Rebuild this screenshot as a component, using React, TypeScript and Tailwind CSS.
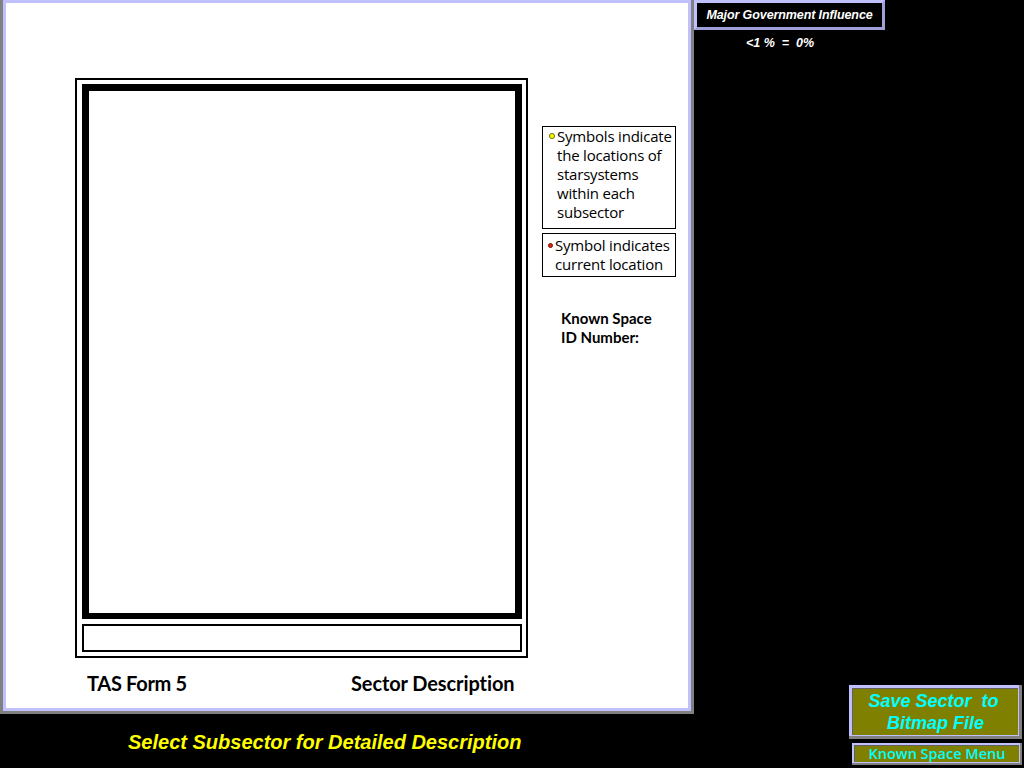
import React from "react";

export default function App() {
  return (
    <div className="w-[1024px] h-[768px] bg-black flex overflow-hidden">
      {/* Left column */}
      <div className="w-[694px] flex flex-col">
        <div className="h-[714px] border-l-[3px] border-r-[3px] border-b-[3px] border-[#808080]">
          <div className="h-full border-[3px] border-[#c0c0fc] bg-white flex">
            <div className="ml-[69px] mt-[75px] flex flex-col">
              <div className="w-[453px] h-[580px] border-2 border-black pl-[5px] pr-[4px] pt-[4px] flex flex-col">
                <div className="w-[440px] h-[535px] border-[7px] border-b-[6px] border-black" />
                <div className="w-[440px] h-[28px] mt-[5px] border-2 border-black" />
              </div>
              <div
                className="flex mt-[13px] text-[20px] font-bold text-black leading-[24px]"
                style={{ fontFamily: "Lato, 'Open Sans', sans-serif" }}
              >
                <span className="ml-[12px] w-[264px] tracking-[-0.3px]">TAS Form 5</span>
                <span className="tracking-[-0.1px]">Sector Description</span>
              </div>
            </div>
            <div
              className="ml-[14px] mt-[123px] flex flex-col text-[15px] text-black"
              style={{ fontFamily: "'Open Sans', Lato, sans-serif" }}
            >
              <div className="w-[134px] h-[103px] border border-black pt-0 pl-[6px] flex items-start leading-[19px]">
                <span className="mt-[6px] w-[6px] h-[6px] rounded-full bg-[#ffff00] border border-[#6a6a00] shrink-0" />
                <span className="ml-[2px] tracking-[-0.2px]">
                  Symbols indicate the locations of starsystems within each subsector
                </span>
              </div>
              <div className="w-[134px] h-[44px] mt-[4px] border border-black pt-[2px] pl-[5px] flex items-start leading-[19px]">
                <span className="mt-[7px] w-[5px] h-[5px] rounded-full bg-[#e02010] border border-[#801000] shrink-0" />
                <span className="ml-[2px] tracking-[-0.2px]">Symbol indicates current location</span>
              </div>
              <div
                className="ml-[19px] mt-[32px] font-bold leading-[19px] text-[15px]"
                style={{ fontFamily: "Lato, 'Open Sans', sans-serif" }}
              >
                <div>Known Space</div>
                <div>ID Number:</div>
              </div>
            </div>
          </div>
        </div>
        <div
          className="pl-[128px] pt-[15px] text-[#ffff00] text-[20px] font-bold italic leading-[26px]"
          style={{ fontFamily: "'Liberation Sans', Arial, sans-serif" }}
        >
          Select Subsector for Detailed Description
        </div>
      </div>

      {/* Right column */}
      <div className="flex-1 flex flex-col" style={{ fontFamily: "'Liberation Sans', Arial, sans-serif" }}>
        <div className="w-[191px] h-[30px] border-[3px] border-[#c0c0fc] border-r-[#a0a0d8] border-b-[#a0a0d8] flex items-center justify-center">
          <span className="text-white italic font-bold text-[12.5px] tracking-[-0.1px]">Major Government Influence</span>
        </div>
        <div className="w-[172px] mt-[4px] text-center text-white italic font-bold text-[12.5px] whitespace-pre">&lt;1 %  =  0%</div>

        <div className="mt-auto flex flex-col items-end pr-[2px] pb-[3px]">
          <div className="w-[173px] h-[54px] bg-[#c0c0fc] border-r-[3px] border-b-[3px] border-[#808080] p-[3px] pr-[1px] pb-[1px]">
            <div className="h-full bg-[#808000] border-t border-l border-[#606060] flex flex-col items-center justify-center text-[#00ffff] italic font-bold text-[18px] leading-[22px]">
              <span className="pr-[4px]">Save Sector&nbsp; to</span>
              <span>Bitmap File</span>
            </div>
          </div>
          <div className="w-[170px] h-[22px] mt-[4px] bg-[#c0c0fc] border-r-[2px] border-b-[2px] border-[#808080] p-[2px] pr-[1px] pb-[1px]">
            <div
              className="h-full bg-[#808000] border-t border-l border-[#606060] flex items-center justify-center text-[#00ffff] font-semibold text-[14.5px] leading-[16px]"
              style={{ fontFamily: "'Open Sans', Lato, sans-serif" }}
            >
              Known Space Menu
            </div>
          </div>
        </div>
      </div>
    </div>
  );
}
